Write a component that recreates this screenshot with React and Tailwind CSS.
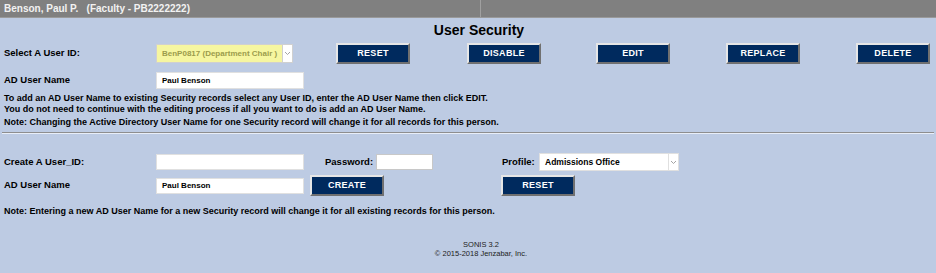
import React from "react";

function NavyButton({ children, className = "" }) {
  return (
    <button
      type="button"
      className={
        "h-[21px] w-[74px] bg-[#002a5e] text-white text-[9px] font-bold tracking-[0.3px] border-2 border-t-[#e6e6e6] border-l-[#e6e6e6] border-r-[#707070] border-b-[#707070] leading-none " +
        className
      }
    >
      {children}
    </button>
  );
}

function Chevron() {
  return (
    <svg width="7" height="5" viewBox="0 0 7 5" className="block">
      <path d="M1 1 L3.5 3.5 L6 1" fill="none" stroke="#9a9a9a" strokeWidth="0.9" />
    </svg>
  );
}

export default function App() {
  return (
    <div
      className="w-[936px] h-[273px] bg-[#bdcbe3] text-black overflow-hidden"
      style={{ fontFamily: '"Liberation Sans", Arial, sans-serif' }}
    >
      {/* top bar */}
      <div className="flex h-[18px] bg-[#808080] border-b border-[#9a9a9a]">
        <div className="w-[481px] border-r border-[#a0a0a0] pl-[4px] flex items-center text-[10px] font-bold text-[#f2f2f2] whitespace-pre">
          Benson, Paul P.   (Faculty - PB2222222)
        </div>
        <div className="flex-1" />
      </div>

      <div className="px-[4px]">
        <h1 className="text-center text-[14px] font-bold leading-none pt-[5px] pl-[22px] h-[25px]">
          User Security
        </h1>

        {/* select row */}
        <div className="flex items-center h-[21px] text-[9.5px] font-bold">
          <div className="w-[152px]">Select A User ID:</div>
          <div className="flex h-[19px] w-[137px] border border-[#d0d0d0] bg-[#f6f6a0]">
            <div className="flex-1 flex items-center pl-[5px] text-[8px] font-bold text-[#9c9c4c] whitespace-pre">
              BenP0817 (Department Chair )
            </div>
            <div className="w-[10px] bg-white border-l border-[#d0d0d0] flex items-center justify-center">
              <Chevron />
            </div>
          </div>
          <NavyButton className="ml-[43px]">RESET</NavyButton>
          <NavyButton className="ml-[57px]">DISABLE</NavyButton>
          <NavyButton className="ml-[55px]">EDIT</NavyButton>
          <NavyButton className="ml-[56px]">REPLACE</NavyButton>
          <NavyButton className="ml-[56px]">DELETE</NavyButton>
        </div>

        {/* AD user name */}
        <div className="flex items-center h-[17px] mt-[8px] text-[9.5px] font-bold">
          <div className="w-[152px]">AD User Name</div>
          <div className="h-[17px] w-[148px] bg-white border border-[#e0e0e0] flex items-center pl-[5px] text-[8px]">
            Paul Benson
          </div>
        </div>

        <div className="mt-[4px] text-[9px] font-bold leading-[11px]">
          <p>To add an AD User Name to existing Security records select any User ID, enter the AD User Name then click EDIT.</p>
          <p>You do not need to continue with the editing process if all you want to do is add an AD User Name.</p>
          <p className="mt-[2px]">Note: Changing the Active Directory User Name for one Security record will change it for all records for this person.</p>
        </div>
      </div>

      <div className="mt-[4px] mx-[2px] border-t border-t-[#8e8e8e] border-b border-b-[#e8eef8]" />

      <div className="px-[4px] mt-[19px] text-[9.5px] font-bold">
        {/* create row */}
        <div className="flex items-center h-[18px]">
          <div className="w-[152px]">Create A User_ID:</div>
          <div className="h-[16px] w-[148px] bg-white border border-[#e0e0e0]" />
          <div className="ml-[21px] w-[51px]">Password:</div>
          <div className="h-[16px] w-[57px] bg-white border border-[#c8c8c8]" />
          <div className="ml-[69px] w-[37px]">Profile:</div>
          <div className="flex h-[18px] w-[140px] bg-white border border-[#e0e0e0]">
            <div className="flex-1 flex items-center pl-[5px] text-[8.5px]">Admissions Office</div>
            <div className="w-[10px] border-l border-[#e0e0e0] flex items-center justify-center">
              <Chevron />
            </div>
          </div>
        </div>

        {/* AD user name + buttons */}
        <div className="flex items-center h-[21px] mt-[4px]">
          <div className="w-[152px]">AD User Name</div>
          <div className="h-[16px] w-[148px] bg-white border border-[#e0e0e0] flex items-center pl-[5px] text-[8px]">
            Paul Benson
          </div>
          <NavyButton className="ml-[6px]">CREATE</NavyButton>
          <NavyButton className="ml-[117px]">RESET</NavyButton>
        </div>

        <p className="mt-[10px] text-[9px] leading-[11px]">
          Note: Entering a new AD User Name for a new Security record will change it for all existing records for this person.
        </p>
      </div>

      <div className="mt-[23px] pl-[26px] text-center text-[7.5px] leading-[9px] text-[#222]">
        <div>SONIS 3.2</div>
        <div>© 2015-2018 Jenzabar, Inc.</div>
      </div>
    </div>
  );
}
